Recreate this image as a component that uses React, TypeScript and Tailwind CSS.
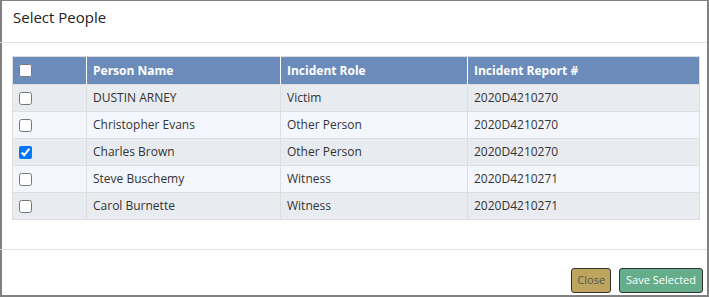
import React from "react";

const rows = [
  { name: "DUSTIN ARNEY", role: "Victim", report: "2020D4210270", checked: false },
  { name: "Christopher Evans", role: "Other Person", report: "2020D4210270", checked: false },
  { name: "Charles Brown", role: "Other Person", report: "2020D4210270", checked: true },
  { name: "Steve Buschemy", role: "Witness", report: "2020D4210271", checked: false },
  { name: "Carol Burnette", role: "Witness", report: "2020D4210271", checked: false },
];

export default function App() {
  return (
    <div
      className="w-[709px] h-[297px] bg-white border-2 border-t border-[#808080] flex flex-col"
      style={{ fontFamily: '"Open Sans", "Noto Sans", sans-serif' }}
    >
      <div className="h-[42px] pt-[5px] text-[15px] leading-[22px] text-[#222] border-b border-[#dedede] -ml-[2px] pl-[13px]">
        Select People
      </div>
      <div className="pt-[13px] pl-[10px] pr-[7px] h-[206px]">
        <table className="w-full border-collapse border border-[#dedede] text-[12px] text-[#333]">
          <thead>
            <tr className="bg-[#6b8cba] text-white h-[28px]">
              <th className="w-[74px] border-r border-white text-left pl-[6px] font-normal">
                <input type="checkbox" className="m-0 w-[13px] h-[13px] align-middle block" />
              </th>
              <th className="w-[194px] border-r border-white text-left pl-[6px] font-bold">Person Name</th>
              <th className="w-[187px] border-r border-white text-left pl-[6px] font-bold">Incident Role</th>
              <th className="text-left pl-[6px] font-bold">Incident Report #</th>
            </tr>
          </thead>
          <tbody>
            {rows.map((r, i) => (
              <tr
                key={i}
                className={(i % 2 === 0 ? "bg-[#e8ebf0]" : "bg-[#f3f7fd]") + " h-[27px] border-t border-[#dedede]"}
              >
                <td className="border-r border-[#dedede] pl-[6px]">
                  <input
                    type="checkbox"
                    defaultChecked={r.checked}
                    className="m-0 w-[13px] h-[13px] block"
                  />
                </td>
                <td className="border-r border-[#dedede] pl-[6px]">{r.name}</td>
                <td className="border-r border-[#dedede] pl-[6px]">{r.role}</td>
                <td className="pl-[6px]">{r.report}</td>
              </tr>
            ))}
          </tbody>
        </table>
      </div>
      <div className="border-t border-[#dedede] -ml-[2px] flex-1 flex items-end justify-end gap-[8px] pr-[4px] pb-[2px]">
        <button className="h-[25px] px-[5px] bg-[#bea55e] border border-[#333] rounded-[3px] text-[11px] text-[#555]">
          Close
        </button>
        <button className="h-[25px] px-[6px] bg-[#65ad8b] border border-[#333] rounded-[3px] text-[11px] text-white">
          Save Selected
        </button>
      </div>
    </div>
  );
}
